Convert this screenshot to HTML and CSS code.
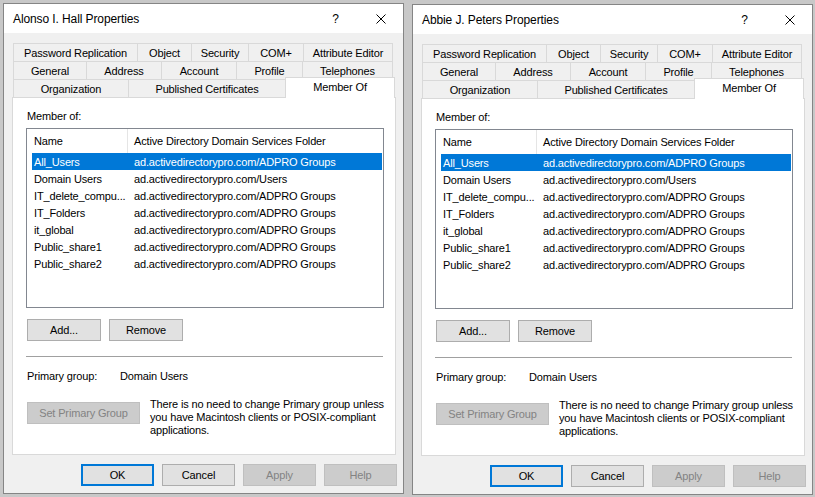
FILE: index.html
```html
<!DOCTYPE html>
<html lang="en">
<head>
<meta charset="utf-8">
<title>Properties</title>
<link rel="stylesheet" href="styles.css">
</head>
<body>
<div class="screen">
  <div class="dialog">
    <div class="titlebar">
      <span class="title">Alonso I. Hall Properties</span>
      <span class="tb-btn help">?</span>
      <span class="tb-btn close"><svg width="10" height="10" viewBox="0 0 10 10"><path d="M0.5 0.5L9.5 9.5M9.5 0.5L0.5 9.5" stroke="#000" stroke-width="1" fill="none"/></svg></span>
    </div>
    <div class="content">
      <div class="tabs">
        <div class="tabrow r1">
          <div class="tab w125">Password Replication</div>
          <div class="tab w55">Object</div>
          <div class="tab w58">Security</div>
          <div class="tab w56">COM+</div>
          <div class="tab w90">Attribute Editor</div>
        </div>
        <div class="tabrow r2">
          <div class="tab w74">General</div>
          <div class="tab w76">Address</div>
          <div class="tab w76">Account</div>
          <div class="tab w67">Profile</div>
          <div class="tab w91">Telephones</div>
        </div>
        <div class="tabrow r3">
          <div class="tab w116">Organization</div>
          <div class="tab w158">Published Certificates</div>
          <div class="tab selected">Member Of</div>
        </div>
      </div>
      <div class="page">
        <div class="label">Member of:</div>
        <div class="list">
          <div class="lhead"><span class="hc1">Name</span><span class="hc2">Active Directory Domain Services Folder</span></div>
          <div class="row sel"><span class="c1">All_Users</span><span class="c2">ad.activedirectorypro.com/ADPRO Groups</span></div>
          <div class="row"><span class="c1">Domain Users</span><span class="c2">ad.activedirectorypro.com/Users</span></div>
          <div class="row"><span class="c1">IT_delete_compu...</span><span class="c2">ad.activedirectorypro.com/ADPRO Groups</span></div>
          <div class="row"><span class="c1">IT_Folders</span><span class="c2">ad.activedirectorypro.com/ADPRO Groups</span></div>
          <div class="row"><span class="c1">it_global</span><span class="c2">ad.activedirectorypro.com/ADPRO Groups</span></div>
          <div class="row"><span class="c1">Public_share1</span><span class="c2">ad.activedirectorypro.com/ADPRO Groups</span></div>
          <div class="row"><span class="c1">Public_share2</span><span class="c2">ad.activedirectorypro.com/ADPRO Groups</span></div>
        </div>
        <div class="btnrow"><span class="btn">Add...</span><span class="btn">Remove</span></div>
        <div class="sep"></div>
        <div class="prim"><span class="pl">Primary group:</span><span>Domain Users</span></div>
        <div class="setrow">
          <span class="btn disabled wide">Set Primary Group</span>
          <p class="note">There is no need to change Primary group unless<br>you have Macintosh clients or POSIX-compliant<br>applications.</p>
        </div>
      </div>
      <div class="footer">
        <span class="btn fbtn default">OK</span>
        <span class="btn fbtn">Cancel</span>
        <span class="btn fbtn disabled">Apply</span>
        <span class="btn fbtn disabled">Help</span>
      </div>
    </div>
  </div>

  <div class="dialog second">
    <div class="titlebar">
      <span class="title">Abbie J. Peters Properties</span>
      <span class="tb-btn help">?</span>
      <span class="tb-btn close"><svg width="10" height="10" viewBox="0 0 10 10"><path d="M0.5 0.5L9.5 9.5M9.5 0.5L0.5 9.5" stroke="#000" stroke-width="1" fill="none"/></svg></span>
    </div>
    <div class="content">
      <div class="tabs">
        <div class="tabrow r1">
          <div class="tab w125">Password Replication</div>
          <div class="tab w55">Object</div>
          <div class="tab w58">Security</div>
          <div class="tab w56">COM+</div>
          <div class="tab w90">Attribute Editor</div>
        </div>
        <div class="tabrow r2">
          <div class="tab w74">General</div>
          <div class="tab w76">Address</div>
          <div class="tab w76">Account</div>
          <div class="tab w67">Profile</div>
          <div class="tab w91">Telephones</div>
        </div>
        <div class="tabrow r3">
          <div class="tab w116">Organization</div>
          <div class="tab w158">Published Certificates</div>
          <div class="tab selected">Member Of</div>
        </div>
      </div>
      <div class="page">
        <div class="label">Member of:</div>
        <div class="list">
          <div class="lhead"><span class="hc1">Name</span><span class="hc2">Active Directory Domain Services Folder</span></div>
          <div class="row sel"><span class="c1">All_Users</span><span class="c2">ad.activedirectorypro.com/ADPRO Groups</span></div>
          <div class="row"><span class="c1">Domain Users</span><span class="c2">ad.activedirectorypro.com/Users</span></div>
          <div class="row"><span class="c1">IT_delete_compu...</span><span class="c2">ad.activedirectorypro.com/ADPRO Groups</span></div>
          <div class="row"><span class="c1">IT_Folders</span><span class="c2">ad.activedirectorypro.com/ADPRO Groups</span></div>
          <div class="row"><span class="c1">it_global</span><span class="c2">ad.activedirectorypro.com/ADPRO Groups</span></div>
          <div class="row"><span class="c1">Public_share1</span><span class="c2">ad.activedirectorypro.com/ADPRO Groups</span></div>
          <div class="row"><span class="c1">Public_share2</span><span class="c2">ad.activedirectorypro.com/ADPRO Groups</span></div>
        </div>
        <div class="btnrow"><span class="btn">Add...</span><span class="btn">Remove</span></div>
        <div class="sep"></div>
        <div class="prim"><span class="pl">Primary group:</span><span>Domain Users</span></div>
        <div class="setrow">
          <span class="btn disabled wide">Set Primary Group</span>
          <p class="note">There is no need to change Primary group unless<br>you have Macintosh clients or POSIX-compliant<br>applications.</p>
        </div>
      </div>
      <div class="footer">
        <span class="btn fbtn default">OK</span>
        <span class="btn fbtn">Cancel</span>
        <span class="btn fbtn disabled">Apply</span>
        <span class="btn fbtn disabled">Help</span>
      </div>
    </div>
  </div>
</div>
</body>
</html>
```

FILE: styles.css
```css
* { box-sizing: border-box; }
html, body { margin: 0; padding: 0; }
body {
  width: 815px;
  height: 497px;
  overflow: hidden;
  background: #c8c8c8;
  font-family: "Liberation Sans", Arial, sans-serif;
  font-size: 11px;
  letter-spacing: -0.15px;
  color: #000;
}
.screen {
  display: flex;
  gap: 8px;
  padding: 3px 0 0 3px;
}
.dialog {
  width: 401px;
  height: 491px;
  border: 1px solid #858585;
  background: #f0f0f0;
  display: flex;
  flex-direction: column;
}
.dialog.second { margin-top: 1px; }

.titlebar {
  height: 29px;
  flex: none;
  background: #fff;
  display: flex;
  align-items: center;
}
.title {
  flex: 1;
  padding-left: 9px;
  font-size: 12px;
  letter-spacing: -0.1px;
}
.tb-btn {
  width: 45px;
  height: 29px;
  display: flex;
  align-items: center;
  justify-content: center;
}
.help { font-size: 12px; }

.content {
  flex: 1;
  display: flex;
  flex-direction: column;
  padding: 10px 7px 0 8px;
}
.tabs { display: flex; flex-direction: column; }
.tabrow {
  display: flex;
  align-items: flex-start;
  margin-left: 1px;
}
.tab {
  height: 18px;
  border: 1px solid #d9d9d9;
  border-bottom: none;
  margin-right: -1px;
  display: flex;
  align-items: center;
  justify-content: center;
  white-space: nowrap;
  background: #f0f0f0;
}
.r3 .tab.selected {
  position: relative;
  z-index: 1;
  width: 110px;
  height: 21px;
  margin-top: -2px;
  margin-bottom: -1px;
  background: #fff;
  padding-bottom: 2px;
}
.w55 { width: 55px; }
.w56 { width: 56px; }
.w58 { width: 58px; }
.w67 { width: 67px; }
.w74 { width: 74px; }
.w76 { width: 76px; }
.w90 { width: 90px; }
.w91 { width: 91px; }
.w116 { width: 116px; }
.w125 { width: 125px; }
.w158 { width: 158px; }

.page {
  width: 384px;
  height: 358px;
  border: 1px solid #d9d9d9;
  background: #fff;
  padding: 12px 0 0 13px;
}
.label {
  line-height: 13px;
  padding-left: 1px;
}
.list {
  width: 358px;
  height: 180px;
  margin-top: 5px;
  border: 1px solid #828790;
  background: #fff;
}
.lhead {
  display: flex;
  height: 24px;
  align-items: stretch;
}
.hc1 {
  width: 101px;
  padding-left: 7px;
  border-right: 1px solid #e5e5e5;
  display: flex;
  align-items: center;
}
.hc2 {
  padding-left: 6px;
  display: flex;
  align-items: center;
}
.row {
  display: flex;
  align-items: center;
  height: 17px;
  margin: 0 1px 0 5px;
  white-space: nowrap;
}
.row.sel { background: #0078d7; color: #fff; }
.c1 { width: 102px; padding-left: 2px; }

.btnrow {
  display: flex;
  gap: 8px;
  margin-top: 11px;
  padding-left: 1px;
}
.btn {
  width: 74px;
  height: 22px;
  background: #e1e1e1;
  border: 1px solid #adadad;
  display: flex;
  align-items: center;
  justify-content: center;
  white-space: nowrap;
}
.btn.fbtn { width: 73px; }
.btn.disabled {
  background: #cccccc;
  border-color: #bfbfbf;
  color: #838383;
}
.btn.default { border: 2px solid #0078d7; }
.btn.wide { width: 113px; }

.sep {
  width: 357px;
  height: 1px;
  background: #a0a0a0;
  margin-top: 15px;
}
.prim {
  display: flex;
  margin-top: 13px;
  line-height: 13px;
  padding-left: 1px;
}
.pl { width: 93px; }
.setrow {
  display: flex;
  align-items: flex-start;
  margin-top: 19px;
  padding-left: 1px;
}
.note {
  margin: -4px 0 0 10px;
  line-height: 13px;
}
.footer {
  display: flex;
  justify-content: flex-end;
  gap: 8px;
  margin-top: 9px;
  margin-right: -1px;
}
```
